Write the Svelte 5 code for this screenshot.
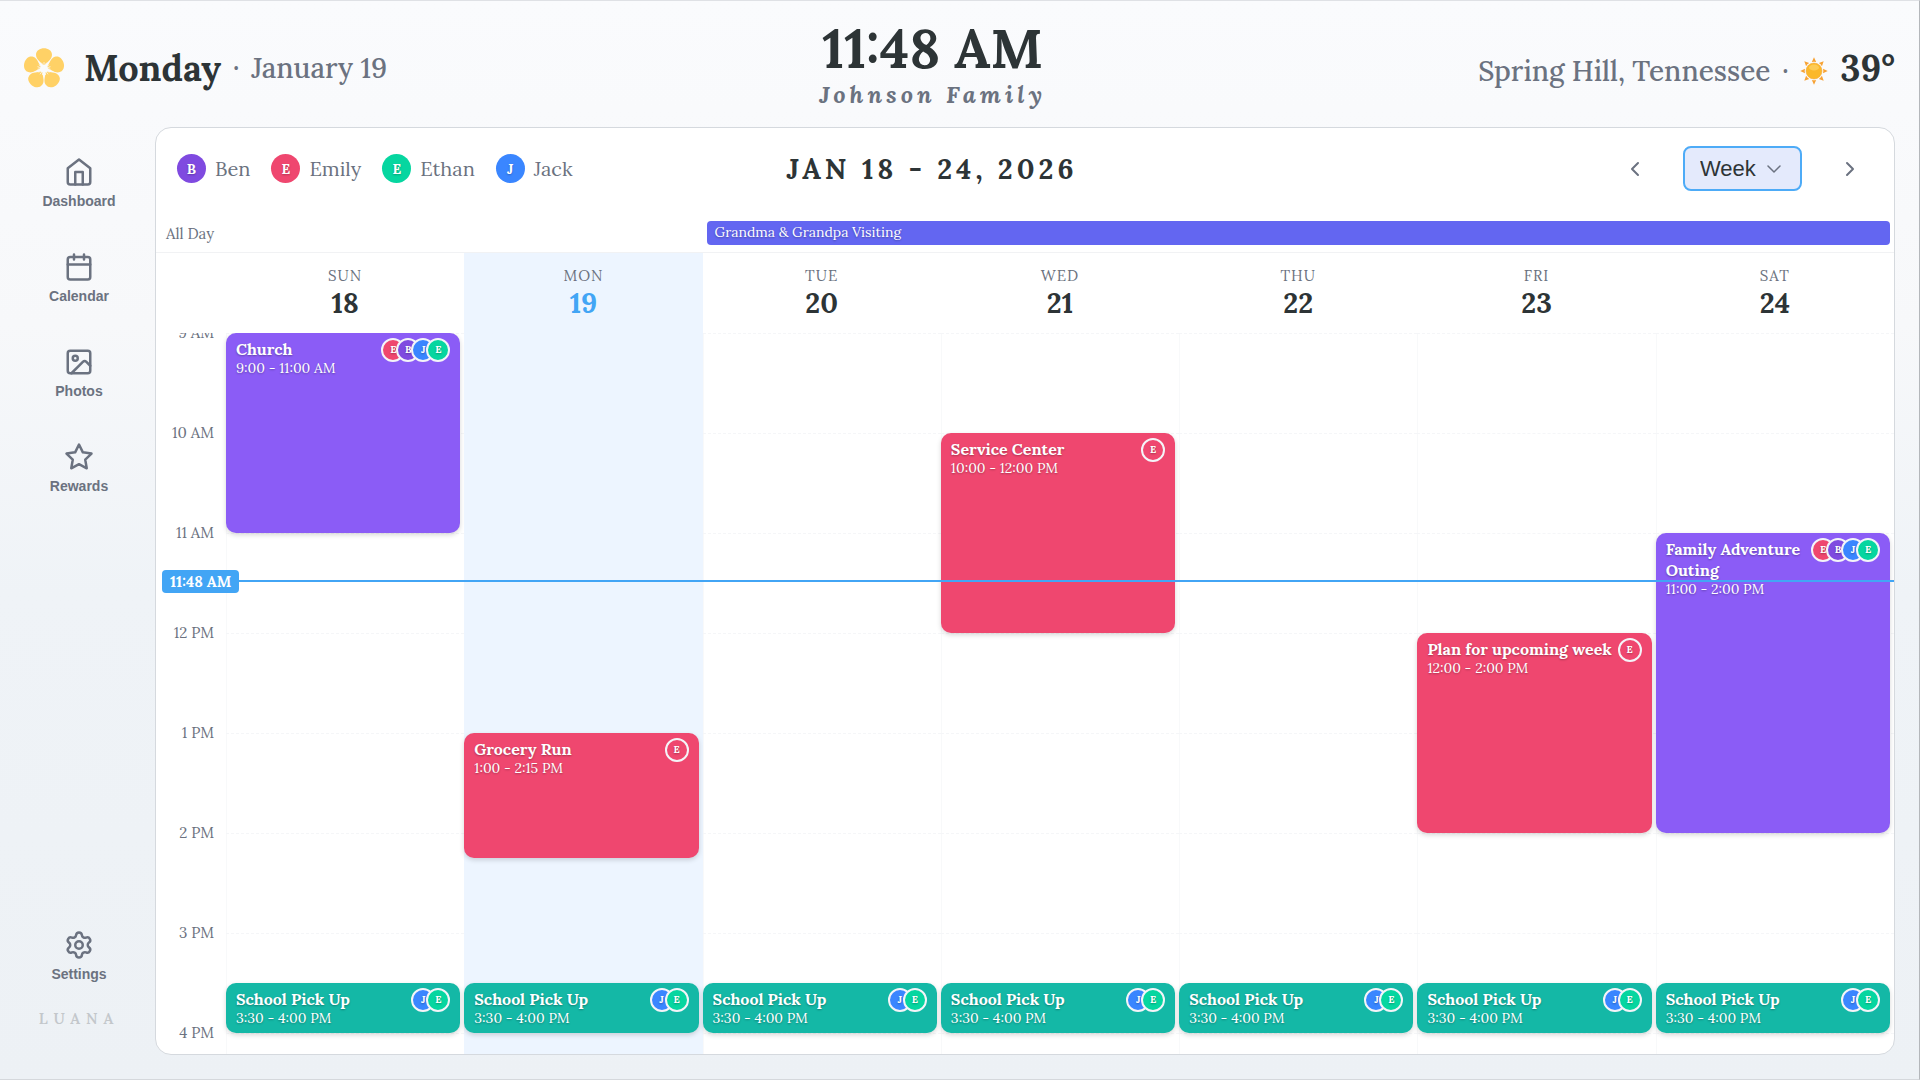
<script>
  const people = {
    ben: { name: 'Ben', initial: 'B', cls: 'ben' },
    emily: { name: 'Emily', initial: 'E', cls: 'emily' },
    ethan: { name: 'Ethan', initial: 'E', cls: 'ethan' },
    jack: { name: 'Jack', initial: 'J', cls: 'jack' }
  };
  const family = ['emily', 'ben', 'jack', 'ethan'];
  const pickup = { title: 'School Pick Up', time: '3:30 - 4:00 PM', from: 15.5, to: 16, color: 'teal', who: ['jack', 'ethan'] };
  const days = [
    { name: 'SUN', num: 18, events: [{ title: 'Church', time: '9:00 - 11:00 AM', from: 9, to: 11, color: 'violet', who: family }, pickup] },
    { name: 'MON', num: 19, today: true, events: [{ title: 'Grocery Run', time: '1:00 - 2:15 PM', from: 13, to: 14.25, color: 'rose', who: ['emily'] }, pickup] },
    { name: 'TUE', num: 20, events: [pickup] },
    { name: 'WED', num: 21, events: [{ title: 'Service Center', time: '10:00 - 12:00 PM', from: 10, to: 12, color: 'rose', who: ['emily'] }, pickup] },
    { name: 'THU', num: 22, events: [pickup] },
    { name: 'FRI', num: 23, events: [{ title: 'Plan for upcoming week', time: '12:00 - 2:00 PM', from: 12, to: 14, color: 'rose', who: ['emily'] }, pickup] },
    { name: 'SAT', num: 24, events: [{ title: 'Family Adventure Outing', time: '11:00 - 2:00 PM', from: 11, to: 14, color: 'violet', who: family }, pickup] }
  ];
  const hours = ['9 AM', '10 AM', '11 AM', '12 PM', '1 PM', '2 PM', '3 PM', '4 PM'];
  const nowTop = 247;
  const row = (h) => Math.round((h - 9) * 4) + 1;
</script>

<div class="page">
  <header class="top">
    <div class="date">
      <svg class="flower" viewBox="0 0 40 40" aria-hidden="true">
        {#each [0, 72, 144, 216, 288] as a}
          <path transform="rotate({a} 20 20.8)" d="M19 17.500C17.500 14 12 12 12 6.800C12 2.500 16 0.300 20 0.300S28 2.500 28 6.800C28 12 22.500 14 21 17.500Z" />
        {/each}
        <circle class="core" cx="20" cy="20.8" r="4" />
        {#each [0, 72, 144, 216, 288] as a}
          <path class="spoke" transform="rotate({a} 20 20.8)" d="M20 17V14M18.800 17L17.600 14.800M21.200 17L22.400 14.800" />
        {/each}
      </svg>
      <strong>Monday</strong><span class="dot">·</span><span>January 19</span>
    </div>
    <div class="clock">
      <h1>11:48 AM</h1>
      <p>Johnson Family</p>
    </div>
    <div class="weather">
      <span>Spring Hill, Tennessee</span><span class="dot">·</span>
      <svg class="sun" viewBox="0 0 28 28" aria-hidden="true">
        {#each [0, 45, 90, 135, 180, 225, 270, 315] as a}
          <path transform="rotate({a} 14 14)" d="M14 0.300 L16.200 5 Q14 4.300 11.800 5Z" />
        {/each}
        <circle cx="14" cy="14" r="8" />
        <ellipse cx="14" cy="10.500" rx="5" ry="3" />
      </svg>
      <b>39°</b>
    </div>
  </header>

  <div class="body">
    <nav>
      <a href="#dashboard">
        <svg viewBox="0 0 24 24"><path d="m3 9 9-7 9 7v11a2 2 0 0 1-2 2H5a2 2 0 0 1-2-2z" /><path d="M9 22V12h6v10" /></svg>
        Dashboard
      </a>
      <a href="#calendar">
        <svg viewBox="0 0 24 24"><rect x="3" y="4" width="18" height="18" rx="2" /><path d="M16 2v4M8 2v4M3 10h18" /></svg>
        Calendar
      </a>
      <a href="#photos">
        <svg viewBox="0 0 24 24"><rect x="3" y="3" width="18" height="18" rx="2" /><circle cx="9" cy="9" r="2" /><path d="m21 15-3.086-3.086a2 2 0 0 0-2.828 0L6 21" /></svg>
        Photos
      </a>
      <a href="#rewards">
        <svg viewBox="0 0 24 24"><path d="m12 2 3.090 6.260L22 9.270l-5 4.870 1.180 6.880L12 17.770l-6.180 3.250L7 14.140 2 9.270l6.910-1.010z" /></svg>
        Rewards
      </a>
      <a href="#settings" class="settings">
        <svg viewBox="0 0 24 24"><path d="M9.671 4.136a2.340 2.340 0 0 1 4.659 0 2.340 2.340 0 0 0 3.319 1.915 2.340 2.340 0 0 1 2.330 4.033 2.340 2.340 0 0 0 0 3.831 2.340 2.340 0 0 1-2.330 4.033 2.340 2.340 0 0 0-3.319 1.915 2.340 2.340 0 0 1-4.659 0 2.340 2.340 0 0 0-3.320-1.915 2.340 2.340 0 0 1-2.330-4.033 2.340 2.340 0 0 0 0-3.831A2.340 2.340 0 0 1 6.350 6.051a2.340 2.340 0 0 0 3.319-1.915" /><circle cx="12" cy="12" r="3" /></svg>
        Settings
      </a>
      <span class="brand">LUANA</span>
    </nav>

    <main>
      <div class="toolbar">
        <ul class="legend">
          {#each Object.values(people) as p}
            <li><span class="avatar {p.cls}">{p.initial}</span>{p.name}</li>
          {/each}
        </ul>
        <h2>JAN 18 - 24, 2026</h2>
        <div class="controls">
          <button class="arrow" aria-label="Previous week"><svg viewBox="0 0 24 24"><path d="m15 18-6-6 6-6" /></svg></button>
          <label class="view">
            <select aria-label="View"><option>Week</option><option>Day</option><option>Month</option></select>
            <svg viewBox="0 0 24 24"><path d="m6 9 6 6 6-6" /></svg>
          </label>
          <button class="arrow" aria-label="Next week"><svg viewBox="0 0 24 24"><path d="m9 18 6-6-6-6" /></svg></button>
        </div>
      </div>

      <div class="columns allday">
        <span class="label">All Day</span>
        <div class="banner">Grandma &amp; Grandpa Visiting</div>
      </div>

      <div class="columns heads">
        <span></span>
        {#each days as d}
          <div class="head" class:today={d.today}><span>{d.name}</span><strong>{d.num}</strong></div>
        {/each}
      </div>

      <div class="columns schedule">
        <div class="hours">
          {#each hours as h}<div>{h}</div>{/each}
        </div>
        {#each days as d}
          <div class="day" class:today={d.today}>
            {#each hours as h, i}
              <i class="line" style="grid-row: {i * 4 + 1}"></i>
            {/each}
            {#each d.events as e}
              <article class="event {e.color}" style="grid-row: {row(e.from)} / {row(e.to)}">
                <div class="text"><h3>{e.title}</h3><p>{e.time}</p></div>
                <div class="who">
                  {#each e.who as w}<span class="mini {people[w].cls}">{people[w].initial}</span>{/each}
                </div>
              </article>
            {/each}
          </div>
        {/each}
        <div class="now" style="top: {nowTop}px"><span>11:48 AM</span></div>
      </div>
    </main>
  </div>
</div>

<style>
  :global(body) { background: #eef1f5; }
  * { box-sizing: border-box; }
  h1, h2, h3, p, ul { margin: 0; padding: 0; }
  .page {
    min-height: 100vh;
    display: flex;
    flex-direction: column;
    padding: 0 24px 24px 0;
    border-top: 1px solid #dfe1e5;
    border-right: 1px solid #b4b7bb;
    border-bottom: 1px solid #d5d8dc;
    background: linear-gradient(180deg, #fafbfd 0%, #f7f8fa 30%, #eff3f7 55%, #edf1f5 100%);
    color: #2d3436;
    font-family: Lora, "Liberation Serif", serif;
  }
  .top {
    display: flex;
    justify-content: space-between;
    align-items: center;
    height: 126px;
    padding-left: 24px;
    color: #6b7280;
    font-size: 28px;
    font-weight: 500;
  }
  .date, .weather { display: flex; align-items: center; padding-top: 8px; white-space: nowrap; }
  .flower { width: 40px; height: 40px; margin-right: 20px; fill: #ffd166; }
  .core { fill: #fafbfc; }
  .spoke { fill: none; stroke: #fafbfc; stroke-width: 0.7; }
  .date strong { font-size: 36px; color: #2d3436; }
  .dot { width: 30px; text-align: center; }
  .clock { text-align: center; white-space: nowrap; }
  .clock h1 { font-size: 54px; line-height: 60px; color: #2d3436; }
  .clock p { margin-top: 2px; font-size: 24px; line-height: 28px; font-style: italic; font-weight: 700; letter-spacing: 4px; }
  .weather { align-items: baseline; }
  .weather b { font-size: 36px; color: #2d3436; }
  .sun { align-self: center; width: 28px; height: 28px; margin: 6px 12px 0 0; }
  .sun circle { fill: #fbb82a; stroke: #f6a63a; stroke-width: 0.5; }
  .sun ellipse { fill: #fdcb55; }
  .sun path { fill: #f7a234; }

  .body { flex: 1; display: flex; }
  nav {
    width: 155px;
    padding: 30px 0 26px 3px;
    display: flex;
    flex-direction: column;
    align-items: center;
    gap: 41px;
  }
  nav a {
    display: flex;
    flex-direction: column;
    align-items: center;
    gap: 4px;
    color: #6b7280;
    font: 700 14px/20px "Liberation Sans", sans-serif;
    text-decoration: none;
  }
  svg { display: block; }
  nav svg, .toolbar svg { fill: none; stroke: #6b7280; stroke-width: 2; stroke-linecap: round; stroke-linejoin: round; }
  nav svg { width: 30px; height: 30px; }
  .settings { margin-top: auto; }
  .brand { margin-top: -16px; font-size: 15px; font-weight: 600; line-height: 20px; letter-spacing: 6px; color: #c3c7cb; }

  main {
    flex: 1;
    min-width: 0;
    display: flex;
    flex-direction: column;
    border: 1px solid #d5d9de;
    border-radius: 16px;
    overflow: hidden;
    background: #fff;
  }
  .toolbar {
    height: 81px;
    padding: 0 20px 0 21px;
    display: grid;
    grid-template-columns: 17fr 23fr auto;
    align-items: center;
  }
  .legend { display: flex; gap: 21px; list-style: none; font-size: 20px; color: #6b7280; }
  .legend li { display: flex; align-items: center; gap: 9px; }
  .avatar {
    width: 29px;
    height: 29px;
    border-radius: 50%;
    display: grid;
    place-items: center;
    color: #fff;
    font-size: 14px;
    font-weight: 700;
    text-shadow: 0 1px 2px rgb(0 0 0 / 0.25);
  }
  .ben { background: #7f4ae0; }
  .emily { background: #ef476f; }
  .ethan { background: #06d6a0; }
  .jack { background: #3a86ff; }
  h2 { font-size: 28px; font-weight: 700; letter-spacing: 4px; white-space: nowrap; }
  .controls { display: flex; align-items: center; gap: 24px; }
  .arrow { width: 48px; height: 44px; display: grid; place-items: center; border: 0; padding: 0; background: none; }
  .arrow svg { width: 24px; height: 24px; }
  .view {
    display: flex;
    align-items: center;
    width: 119px;
    height: 45px;
    padding: 0 14px 0 15px;
    border: 2px solid #4dabf7;
    border-radius: 8px;
    background: #e4eafc;
  }
  .view select {
    appearance: none;
    flex: 1;
    min-width: 0;
    border: 0;
    padding: 0;
    background: none;
    color: #2d3436;
    font: 22px "Liberation Sans", sans-serif;
  }
  .view svg { width: 24px; height: 24px; flex: none; stroke-width: 1.5; }

  .columns { display: grid; grid-template-columns: 70px repeat(7, minmax(0, 1fr)); }
  .allday { height: 44px; align-items: end; border-bottom: 1px solid #f1f2f4; }
  .label { padding: 0 0 6px 10px; font-size: 15px; line-height: 24px; color: #6b7280; }
  .banner {
    grid-column: 4 / 9;
    height: 24px;
    margin: 0 4px 7px;
    padding: 0 8px;
    border-radius: 4px;
    background: #6366f1;
    color: #fff;
    font-size: 14px;
    line-height: 23px;
    text-shadow: 0 1px 2px rgb(0 0 0 / 0.3);
  }
  .head { height: 80px; padding-top: 12px; display: flex; flex-direction: column; align-items: center; }
  .head span { font-size: 15px; line-height: 22px; letter-spacing: 1px; color: #6b7280; }
  .head strong { font-size: 28px; line-height: 33px; }
  .today { background: #edf5ff; }
  .head.today strong { color: #42a5f5; }
  .schedule { position: relative; flex: 1; overflow: hidden; }
  .hours { padding-right: 12px; text-align: right; font-size: 15px; color: #6b7280; line-height: 0; }
  .hours div { height: 100px; }
  .hours div:last-child { height: 20px; }
  .day { display: grid; grid-template-rows: repeat(28, 25px); align-content: start; box-shadow: inset 1px 0 #f8f9fa; }
  .day.today { box-shadow: none; }
  .line { grid-column: 1; height: 1px; border-top: 1px dashed #f5f6f8; }
  .today .line { border-color: #edf5ff; }
  .event {
    grid-column: 1;
    margin-right: 4px;
    padding: 5px 10px;
    display: flex;
    justify-content: space-between;
    gap: 4px;
    border-radius: 10px;
    box-shadow: 0 2px 5px rgb(0 0 0 / 0.16);
    color: #fff;
    text-shadow: 0 1px 2px rgb(0 0 0 / 0.3);
    min-width: 0;
    min-height: 0;
  }
  .violet { background: #8b5cf6; }
  .rose { background: #ef476f; }
  .teal { background: #14b8a6; }
  .text { padding-top: 1px; }
  h3 { font-size: 16px; line-height: 21px; font-weight: 700; }
  .event p { font-size: 14px; line-height: 17px; }
  .who { display: flex; align-items: flex-start; }
  .mini {
    width: 24px;
    height: 24px;
    border: 2px solid #f4f4f8;
    border-radius: 50%;
    display: grid;
    place-items: center;
    font-size: 10px;
    font-weight: 700;
    line-height: 20px;
  }
  .mini + .mini { margin-left: -9px; }
  .now { position: absolute; left: 6px; right: 0; height: 2px; background: #42a5f5; display: flex; align-items: center; }
  .now span {
    flex: none;
    padding: 0 8px;
    border-radius: 4px;
    background: #42a5f5;
    color: #fff;
    font-size: 15px;
    font-weight: 700;
    line-height: 23px;
  }
</style>
